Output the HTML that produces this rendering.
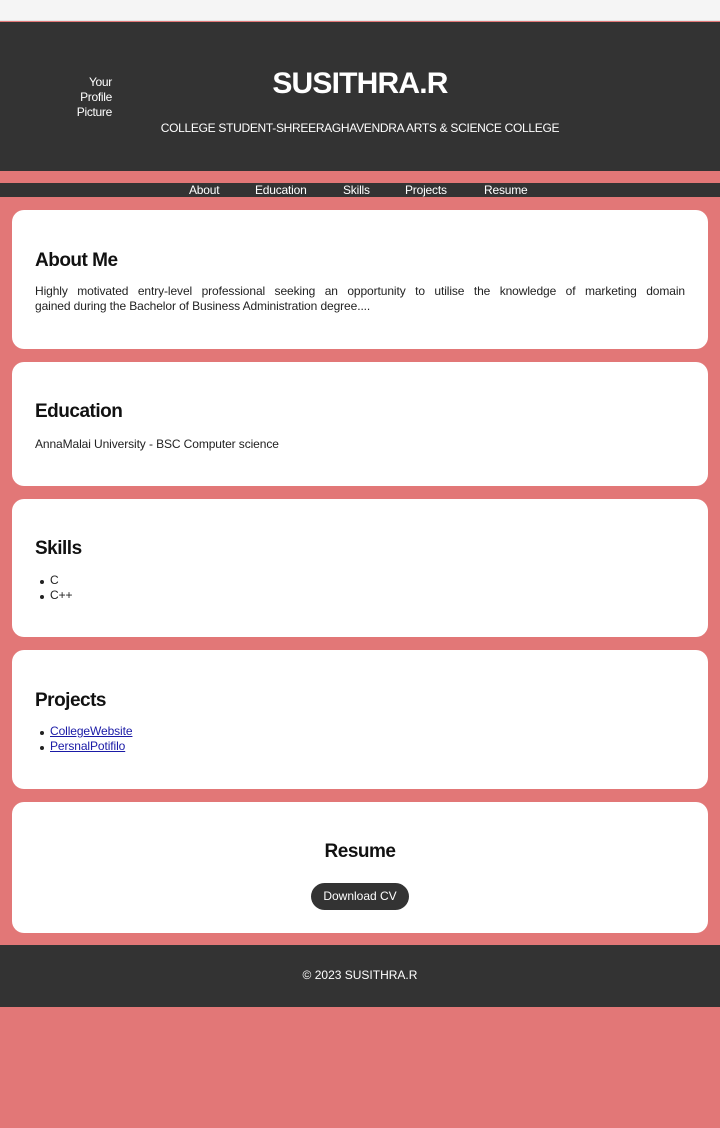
<!DOCTYPE html>
<html><head><meta charset="utf-8"><style>
*{margin:0;padding:0;box-sizing:border-box}
body{width:720px;height:1128px;background:#e27777;font-family:"Liberation Sans",sans-serif;font-size:12px;color:#222;overflow:hidden;position:relative}
.top{position:absolute;left:0;top:0;width:720px;height:21px;background:#f5f5f5;border-bottom:1px solid #e6e6e6}
header{position:absolute;left:0;top:22px;width:720px;height:149px;background:#333;color:#fff}
.pic{position:absolute;left:62px;top:53px;width:50px;text-align:right;font-size:12px;line-height:15px;letter-spacing:-0.3px}
h1{position:absolute;left:0;width:720px;top:45px;text-align:center;font-size:30px;font-weight:bold;letter-spacing:-0.8px}
.sub{position:absolute;left:0;width:720px;top:99px;text-align:center;font-size:12px;letter-spacing:-0.3px}
nav{position:absolute;left:0;top:183px;width:720px;height:14px;background:#333;color:#fff;font-size:12px;line-height:14px;letter-spacing:-0.2px}
nav span{position:absolute;top:0}
.card{position:absolute;left:12px;width:696px;background:#fff;border-radius:12px;padding:0 23px}
h2{font-size:19px;font-weight:bold;letter-spacing:-0.5px;color:#111;position:absolute;left:23px}
.card p,.card ul{position:absolute;left:23px;right:23px;font-size:12px;line-height:15px;letter-spacing:-0.1px}
p.j span{display:block}
p.j .l1{text-align:justify;text-align-last:justify}
ul{list-style:none}
li{padding-left:15px;position:relative}
li:before{content:"";position:absolute;left:5px;top:7px;width:4px;height:4px;border-radius:50%;background:#222}
a{color:#1a1aa6}
.btn{position:absolute;left:299px;top:81px;width:98px;height:27px;border-radius:14px;background:#333;color:#fff;text-align:center;line-height:27px;font-size:12px}
footer{position:absolute;left:0;top:945px;width:720px;height:62px;background:#333;color:#fff;text-align:center;line-height:60px;font-size:12px}
</style></head><body>
<div class="top"></div>
<header>
<div class="pic">Your<br>Profile<br>Picture</div>
<h1>SUSITHRA.R</h1>
<div class="sub">COLLEGE STUDENT-SHREERAGHAVENDRA ARTS &amp; SCIENCE COLLEGE</div>
</header>
<nav><span style="left:189px">About</span><span style="left:255px">Education</span><span style="left:343px">Skills</span><span style="left:405px">Projects</span><span style="left:484px">Resume</span></nav>
<div class="card" style="top:210px;height:139px">
<h2 style="top:40px">About Me</h2>
<p class="j" style="top:74px"><span class="l1">Highly motivated entry-level professional seeking an opportunity to utilise the knowledge of marketing domain</span><span>gained during the Bachelor of Business Administration degree....</span></p>
</div>
<div class="card" style="top:362px;height:124px">
<h2 style="top:39px">Education</h2>
<p style="top:75px">AnnaMalai University - BSC Computer science</p>
</div>
<div class="card" style="top:499px;height:138px">
<h2 style="top:39px">Skills</h2>
<ul style="top:74px"><li>C</li><li>C++</li></ul>
</div>
<div class="card" style="top:650px;height:139px">
<h2 style="top:40px">Projects</h2>
<ul style="top:74px"><li><a href="#">CollegeWebsite</a></li><li><a href="#">PersnalPotifilo</a></li></ul>
</div>
<div class="card" style="top:802px;height:131px">
<h2 style="top:39px;left:0;width:696px;text-align:center">Resume</h2>
<div class="btn">Download CV</div>
</div>
<footer>© 2023 SUSITHRA.R</footer>
</body></html>
